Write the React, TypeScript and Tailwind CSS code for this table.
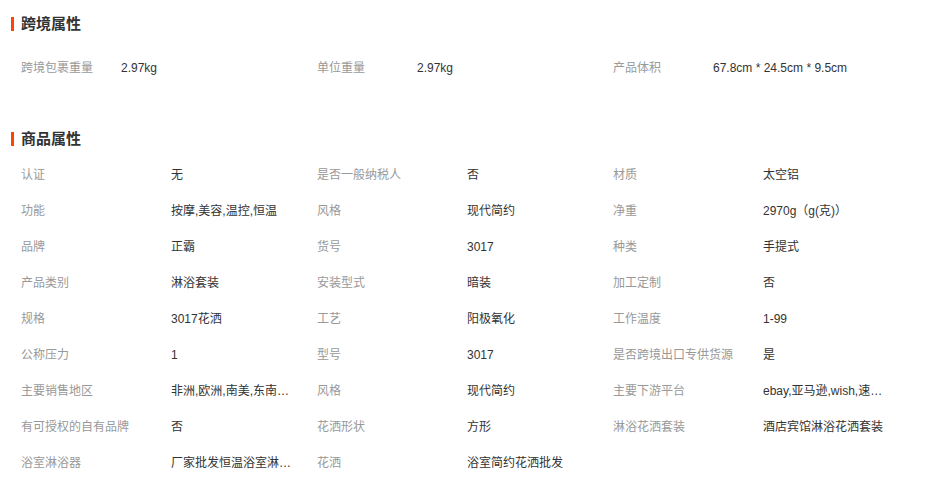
import React from "react";

const font = {
  fontFamily: '"Liberation Sans", "Noto Sans CJK SC", sans-serif',
};

type Item = [string, string];

function Heading({ title }: { title: string }) {
  return (
    <div className="flex items-center h-[18px]">
      <div className="w-[3px] h-[14px] bg-[#ff4400]" />
      <div className="ml-[7px] text-[15px] leading-[18px] font-bold text-[#333]">{title}</div>
    </div>
  );
}

function Cell({ item, labelW, valueW }: { item: Item; labelW: string; valueW: string }) {
  return (
    <div className="flex items-center w-[296px] h-[36px] text-[12px]">
      <div className={`${labelW} shrink-0 text-[#999] whitespace-nowrap`}>{item[0]}</div>
      <div className={`${valueW} text-[#333] whitespace-nowrap overflow-hidden text-ellipsis`}>{item[1]}</div>
    </div>
  );
}

const sec1: Item[] = [
  ["跨境包裹重量", "2.97kg"],
  ["单位重量", "2.97kg"],
  ["产品体积", "67.8cm * 24.5cm * 9.5cm"],
];

const sec2: Item[] = [
  ["认证", "无"],
  ["是否一般纳税人", "否"],
  ["材质", "太空铝"],
  ["功能", "按摩,美容,温控,恒温"],
  ["风格", "现代简约"],
  ["净重", "2970g（g(克)）"],
  ["品牌", "正霸"],
  ["货号", "3017"],
  ["种类", "手提式"],
  ["产品类别", "淋浴套装"],
  ["安装型式", "暗装"],
  ["加工定制", "否"],
  ["规格", "3017花洒"],
  ["工艺", "阳极氧化"],
  ["工作温度", "1-99"],
  ["公称压力", "1"],
  ["型号", "3017"],
  ["是否跨境出口专供货源", "是"],
  ["主要销售地区", "非洲,欧洲,南美,东南亚,北美,东北亚,中东"],
  ["风格", "现代简约"],
  ["主要下游平台", "ebay,亚马逊,wish,速卖通,独立站,LAZADA"],
  ["有可授权的自有品牌", "否"],
  ["花洒形状", "方形"],
  ["淋浴花洒套装", "酒店宾馆淋浴花洒套装"],
  ["浴室淋浴器", "厂家批发恒温浴室淋浴花洒套装"],
  ["花洒", "浴室简约花洒批发"],
];

export default function App() {
  return (
    <div className="w-[926px] h-[487px] bg-white overflow-hidden pl-[11px] pt-[15px]" style={font}>
      <Heading title="跨境属性" />
      <div className="ml-[10px] mt-[17px] flex w-[900px]">
        {sec1.map((it, i) => (
          <Cell key={i} item={it} labelW="w-[100px]" valueW="w-[190px]" />
        ))}
      </div>
      <div className="mt-[44px]">
        <Heading title="商品属性" />
      </div>
      <div className="ml-[10px] mt-[9px] grid grid-cols-[296px_296px_296px]">
        {sec2.map((it, i) => (
          <Cell key={i} item={it} labelW="w-[150px]" valueW="w-[122px]" />
        ))}
      </div>
    </div>
  );
}
